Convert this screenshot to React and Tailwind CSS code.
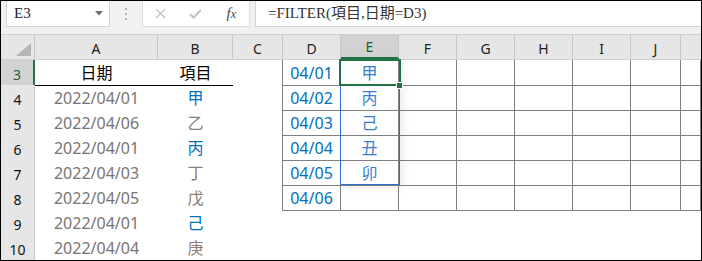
import React from 'react';

const cols = ['A', 'B', 'C', 'D', 'E', 'F', 'G', 'H', 'I', 'J', ''];
const gridCols = 'grid grid-cols-[34px_123px_75px_50px_58px_58px_58px_58px_58px_58px_50px_1fr]';

const rows = [
  { n: 3, a: '日期', b: '項目', head: true, d: '04/01', e: '甲' },
  { n: 4, a: '2022/04/01', b: '甲', blue: true, d: '04/02', e: '丙' },
  { n: 5, a: '2022/04/06', b: '乙', d: '04/03', e: '己' },
  { n: 6, a: '2022/04/01', b: '丙', blue: true, d: '04/04', e: '丑' },
  { n: 7, a: '2022/04/03', b: '丁', d: '04/05', e: '卯' },
  { n: 8, a: '2022/04/05', b: '戊', d: '04/06' },
  { n: 9, a: '2022/04/01', b: '己', blue: true },
  { n: 10, a: '2022/04/04', b: '庚' },
];

// formula bar with name box, buttons and formula text
const FormulaBar = () => (
  <div className="flex h-[33px] bg-[#f1f1f1]">
    <div className="ml-[5px] w-[104px] h-[26px] bg-white border-x border-b border-[#d4d4d4] flex items-center justify-between pl-[7px] pr-[6px]">
      <span className="font-['Liberation_Serif',serif] text-[15px] text-[#222]">E3</span>
      <svg width="8" height="5" viewBox="0 0 8 5">
        <path d="M0 0 H8 L4 4.5 Z" fill="#6e6e6e" />
      </svg>
    </div>
    <div className="w-[32px] h-[26px] flex flex-col items-center justify-center gap-[3px]">
      <span className="w-[2px] h-[2px] bg-[#b5b5b5]" />
      <span className="w-[2px] h-[2px] bg-[#b5b5b5]" />
      <span className="w-[2px] h-[2px] bg-[#b5b5b5]" />
    </div>
    <div className="w-[108px] h-[26px] bg-white border-x border-b border-[#dcdcdc] flex items-center">
      <div className="w-[36px] flex justify-center">
        <svg width="11" height="11" viewBox="0 0 11 11">
          <path d="M1 1 L10 10 M10 1 L1 10" stroke="#c2c2c2" strokeWidth="1.3" />
        </svg>
      </div>
      <div className="w-[36px] flex justify-center">
        <svg width="13" height="10" viewBox="0 0 13 10">
          <path d="M1 5 L4.5 8.5 L12 1" stroke="#c2c2c2" strokeWidth="2" fill="none" />
        </svg>
      </div>
      <div className="w-[36px] flex justify-center">
        <span className="font-['Liberation_Serif',serif] italic text-[15px] text-[#444] leading-none">
          f<span className="text-[12px]">x</span>
        </span>
      </div>
    </div>
    <div className="ml-[5px] flex-1 h-[26px] bg-white border-l border-b border-[#d4d4d4] flex items-center pl-[12px]">
      <span className="font-['Liberation_Serif','Noto_Sans_CJK_TC',serif] text-[15px] text-[#333]">
        =FILTER(項目,日期=D3)
      </span>
    </div>
  </div>
);

const HeaderRow = () => (
  <div className={`${gridCols} h-[26px] bg-[#e6e6e6] border-t border-[#d0d0d0] border-b border-[#9e9e9e]`}>
    <div className="flex items-end justify-end pr-[3px] pb-[3px] border-r border-[#c6c6c6]">
      <svg width="15" height="13" viewBox="0 0 15 13">
        <path d="M15 0 V13 H0 Z" fill="#b5b5b5" />
      </svg>
    </div>
    {cols.map((c, i) => (
      <div
        key={i}
        className={
          c === 'E'
            ? 'bg-[#d2d2d2] border-b-2 border-[#217346] flex items-center justify-center text-[14px] text-[#1f5c3a] border-r border-r-[#c6c6c6]'
            : c === ''
            ? ''
            : 'flex items-center justify-center text-[14px] text-[#222] pt-[3px] border-r border-[#c6c6c6]'
        }
      >
        {c}
      </div>
    ))}
  </div>
);

const Row = ({ r }) => {
  const inTable = r.n <= 8;
  const sel = r.n === 3;
  const tb = 'border-r border-b border-[#7f7f7f]';
  return (
    <div className={`${gridCols} h-[25px]`}>
      <div
        className={
          sel
            ? 'bg-[#d2d2d2] border-b border-[#c6c6c6] border-r-2 border-r-[#217346] flex items-center justify-center pt-[4px] text-[14px] text-[#1f5c3a]'
            : 'bg-[#e6e6e6] border-b border-r border-[#c6c6c6] flex items-center justify-center pt-[4px] text-[14px] text-[#111]'
        }
      >
        {r.n}
      </div>
      <div
        className={
          r.head
            ? 'flex items-center justify-center text-[16px] text-black border-b border-black'
            : 'flex items-center justify-center text-[16px] text-[#787474]'
        }
      >
        {r.a}
      </div>
      <div
        className={
          r.head
            ? 'flex items-center justify-center text-[16px] text-black border-b border-black'
            : r.blue
            ? 'flex items-center justify-center text-[16px] text-[#0070c0]'
            : 'flex items-center justify-center text-[16px] text-[#8a7f76]'
        }
      >
        {r.b}
      </div>
      <div className={inTable ? 'border-r border-[#7f7f7f]' : ''} />
      <div className={`flex items-center justify-center text-[16px] text-[#0070c0] ${inTable ? tb : ''}`}>
        {r.d}
      </div>
      <div className={`flex items-center justify-center text-[16px] text-[#3b7dd0] ${inTable ? tb : ''}`}>
        {r.e}
      </div>
      <div className={inTable ? tb : ''} />
      <div className={inTable ? tb : ''} />
      <div className={inTable ? tb : ''} />
      <div className={inTable ? tb : ''} />
      <div className={inTable ? tb : ''} />
      <div className={inTable ? tb : ''} />
      <div />
    </div>
  );
};

export default function App() {
  return (
    <div className="w-[702px] h-[261px] border border-black bg-white overflow-hidden flex flex-col font-['Noto_Sans','Noto_Sans_CJK_TC',sans-serif]">
      <FormulaBar />
      <HeaderRow />
      <div className="relative">
        {rows.map((r) => (
          <Row key={r.n} r={r} />
        ))}
        {/* spill range of the FILTER result */}
        <div className="absolute left-[339px] top-[-1px] w-[60px] h-[126px] border border-[#2f6fd3] shadow-[3px_3px_8px_rgba(0,0,0,0.08)]" />
        {/* active cell */}
        <div className="absolute left-[338px] top-[-1px] w-[62px] h-[27px] border-2 border-[#217346]" />
        <div className="absolute left-[395px] top-[22px] w-[7px] h-[7px] bg-[#217346] border border-white" />
      </div>
    </div>
  );
}
